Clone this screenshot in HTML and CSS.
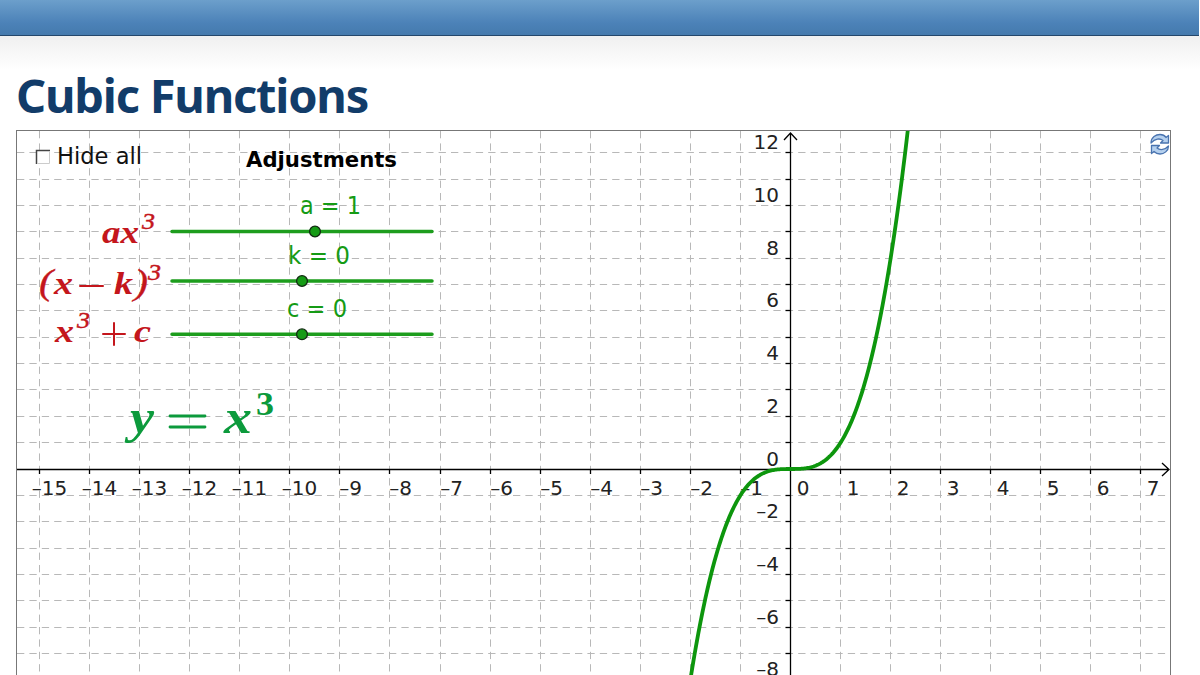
FILE: index.html
```
<!doctype html>
<html>
	<head>
	<meta charset="utf-8">
	<title>Cubic Functions</title>
	<link rel="stylesheet" href="styles.css">
	</head>

	<body>
    <div class="topbar"></div>
    <div class="content">
      <h1 class="title">Cubic Functions</h1>
      <div class="applet">
        <svg class="graph" width="1153" height="545" viewBox="17 131 1153 545">
          <g id="grid" class="grid"></g>
          <g id="axes" class="axes">
            <path d="M17 469.500H1168M1162 463L1169 469.500L1162 476"/>
            <path d="M790.500 676V133M784 140L790.500 133L797 140"/>
          </g>
          <g id="labels" class="labels"></g>
          <path id="curve" class="curve"/>

          <!-- checkbox -->
          <rect x="36" y="150" width="14" height="14" fill="#fff"/>
          <path class="box-dark" d="M36.500 164V150.500H50"/>
          <path class="box-light" d="M37 163.500H49.500V151"/>
          <text class="label" x="57" y="163.500" textLength="85" lengthAdjust="spacingAndGlyphs">Hide all</text>
          <text class="heading" x="246" y="167" textLength="151" lengthAdjust="spacingAndGlyphs">Adjustments</text>

          <!-- sliders -->
          <g class="slider">
            <path d="M172 231.500H432M172 281H432M172 334.300H432"/>
            <circle cx="315" cy="231.500" r="5.400"/>
            <circle cx="302" cy="281" r="5.400"/>
            <circle cx="302" cy="334.300" r="5.400"/>
            <text x="300" y="214" textLength="61" lengthAdjust="spacingAndGlyphs">a = 1</text>
            <text x="288" y="263.500" textLength="62" lengthAdjust="spacingAndGlyphs">k = 0</text>
            <text x="287" y="317" textLength="60" lengthAdjust="spacingAndGlyphs">c = 0</text>
          </g>

          <!-- formulas -->
          <g class="formula">
            <text x="102" y="243" textLength="37" lengthAdjust="spacingAndGlyphs">ax</text>
            <text class="power" x="142" y="229" textLength="13" lengthAdjust="spacingAndGlyphs">3</text>
            <text class="paren" x="39" y="294" textLength="14" lengthAdjust="spacingAndGlyphs">(</text>
            <text x="54" y="294" textLength="19" lengthAdjust="spacingAndGlyphs">x</text>
            <path d="M80 286H103"/>
            <text x="114" y="294" textLength="19" lengthAdjust="spacingAndGlyphs">k</text>
            <text class="paren" x="134" y="294" textLength="14" lengthAdjust="spacingAndGlyphs">)</text>
            <text class="power" x="148" y="279.500" textLength="13" lengthAdjust="spacingAndGlyphs">3</text>
            <text x="55" y="342" textLength="19" lengthAdjust="spacingAndGlyphs">x</text>
            <text class="power" x="77" y="328" textLength="13" lengthAdjust="spacingAndGlyphs">3</text>
            <path d="M103 334H125M114 323V345"/>
            <text x="134" y="342" textLength="17" lengthAdjust="spacingAndGlyphs">c</text>
          </g>
          <g class="equation">
            <text x="130" y="433" textLength="24" lengthAdjust="spacingAndGlyphs">y</text>
            <path d="M170 416H205M170 427H205"/>
            <text x="224" y="433" textLength="28" lengthAdjust="spacingAndGlyphs">x</text>
            <text class="cube" x="256" y="414.500" textLength="18" lengthAdjust="spacingAndGlyphs">3</text>
          </g>

          <!-- reset icon -->
          <g class="reset">
            <path d="M1151 143C1151 137 1156 134.500 1160 134.500C1163 134.500 1165 136 1166 137.500L1168.500 135.500V143H1160.500L1163 140.500C1160 138 1155 138.500 1151 143Z"/>
            <path d="M1168.500 146C1168.500 151 1164 154 1160 154C1157 154 1155 152.500 1154 151.500L1151.500 153.500V145.500H1159.500L1157 148C1160 150.500 1165 150 1168.500 146Z"/>
          </g>
        </svg>
      </div>
    </div>
	<script src="graph.js"></script>
</body>
</html>
```
FILE: graph.js
```
var originX = 790.5;
var originY = 469;
var unitX = 50.07;
var unitY = 26.35;

var grid = document.getElementById("grid");
var axes = document.getElementById("axes");
var labels = document.getElementById("labels");

function px(x) {
	return Math.floor(originX + x * unitX) + 0.5;
}
function py(y) {
	return Math.floor(originY - y * unitY) + 0.5;
}
function addPath(parent, d) {
	var path = document.createElementNS("http://www.w3.org/2000/svg", "path");
	path.setAttribute("d", d);
	parent.appendChild(path);
}
function addLabel(value, x, y, anchor) {
	var text = document.createElementNS("http://www.w3.org/2000/svg", "text");
	text.setAttribute("x", x);
	text.setAttribute("y", y);
	text.setAttribute("text-anchor", anchor);
	text.textContent = String(value).replace("-", "\u2013");
	labels.appendChild(text);
}

// vertical lines and the x axis numbers
for (var i = -15; i <= 7; i++) {
	if (i !== 0) {
		addPath(grid, "M" + px(i) + " 131V676");
		addPath(axes, "M" + px(i) + " 469v5");
	}
	var shift = i < -9 ? 10 : i < 0 ? 11 : 12.5;
	addLabel(i, px(i) + shift, 494.5, "middle");
}

// horizontal lines and the y axis numbers
for (var j = -7; j <= 12; j++) {
	if (j !== 0) {
		addPath(grid, "M17 " + py(j) + "H1170");
		addPath(axes, "M785.5 " + py(j) + "h5");
	}
}
for (var n = -8; n <= 12; n += 2) {
	addLabel(n, 779, py(n) - (n < 0 ? 4 : 3.5), "end");
}

// y = x^3
var d = "";
for (var x = -2.1; x < 2.4; x += 0.02) {
	d += (d ? "L" : "M") + (originX + x * unitX) + " " + (originY - x * x * x * unitY);
}
document.getElementById("curve").setAttribute("d", d);
```
FILE: styles.css
```
body {
	margin: 0;
	overflow: hidden;
	background: #fff;
}
.topbar {
	width: 1199px;
	height: 35px;
	background: linear-gradient(#6c9fcb, #4c82b8 65%, #457aad);
	border-bottom: 1px solid #24476b;
}
.content {
	height: 639px;
	padding: 0 29px 0 16px;
	background: linear-gradient(#f0f0f0, #fff 34px);
}
.title {
	margin: 0;
	height: 94px;
	line-height: 118px;
	font-family: "Noto Sans", sans-serif;
	font-size: 47px;
	font-weight: bold;
	letter-spacing: -1.2px;
	color: #123c69;
	white-space: nowrap;
}
.applet {
	border: 1px solid #777;
	border-bottom: 0;
	background: #fff;
}
.graph {
	display: block;
	font-family: "DejaVu Sans", sans-serif;
}
.grid {
	fill: none;
	stroke: #b8b8b8;
	stroke-dasharray: 7.3 5.1;
}
.axes {
	fill: none;
	stroke: #000;
	stroke-width: 1.3;
}
.labels {
	font-size: 20px;
	fill: #222;
}
.curve {
	fill: none;
	stroke: #0d960d;
	stroke-width: 3.8;
}
.box-dark {
	fill: none;
	stroke: #444;
	stroke-width: 1.5;
}
.box-light {
	fill: none;
	stroke: #ccc;
}
.label {
	font-size: 23px;
	fill: #111;
}
.heading {
	font-size: 21px;
	font-weight: bold;
}
.slider {
	font-size: 24px;
	fill: #159b15;
}
.slider path {
	stroke: #1d9d1d;
	stroke-width: 3.5;
	stroke-linecap: round;
}
.slider circle {
	stroke: #112b11;
	stroke-width: 1.3;
}
.formula {
	font-family: "Liberation Serif", serif;
	font-size: 31px;
	font-weight: bold;
	font-style: italic;
	fill: #c4161c;
}
.formula path {
	stroke: #c4161c;
	stroke-width: 2;
	stroke-linecap: round;
}
.formula .power {
	font-size: 24px;
	font-weight: normal;
	stroke: #c4161c;
	stroke-width: 0.5;
}
.formula .paren {
	font-size: 36px;
	font-weight: normal;
	stroke: #c4161c;
	stroke-width: 0.4;
}
.equation {
	font-family: "Liberation Serif", serif;
	font-size: 48px;
	font-weight: bold;
	font-style: italic;
	fill: #0c9a3c;
}
.equation path {
	stroke: #0c9a3c;
	stroke-width: 2.8;
	stroke-linecap: round;
}
.equation .cube {
	font-size: 33px;
	font-style: normal;
}
.reset {
	fill: #b5d0ee;
	stroke: #4a74b0;
	stroke-width: 1.3;
	stroke-linejoin: round;
}
```
